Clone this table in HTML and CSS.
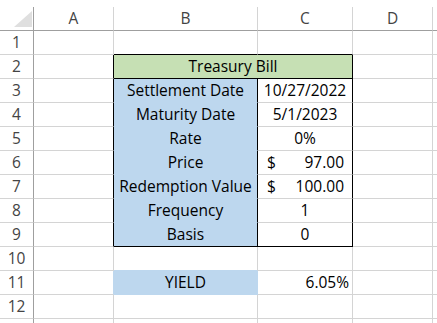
FILE: index.html
```html
<!DOCTYPE html>
<html>
<head>
<meta charset="utf-8">
<link rel="stylesheet" href="styles.css">
</head>
<body>
<div class="sheet">
  <div class="hd corner"><div class="tri"></div></div>
  <div class="hd col">A</div>
  <div class="hd col">B</div>
  <div class="hd col">C</div>
  <div class="hd col">D</div>
  <div class="hd col"></div>

  <div class="rh">1</div>
  <div class="c"></div>
  <div class="c bb-k"></div>
  <div class="c bb-k"></div>
  <div class="c"></div>
  <div class="c"></div>

  <div class="rh">2</div>
  <div class="c br-k"></div>
  <div class="c span2 green br-k bb-k center">Treasury Bill</div>
  <div class="c"></div>
  <div class="c"></div>

  <div class="rh">3</div>
  <div class="c br-k"></div>
  <div class="c blue br-k bb-b center">Settlement Date</div>
  <div class="c br-k center">10/27/2022</div>
  <div class="c"></div>
  <div class="c"></div>

  <div class="rh">4</div>
  <div class="c br-k"></div>
  <div class="c blue br-k bb-b center">Maturity Date</div>
  <div class="c br-k center">5/1/2023</div>
  <div class="c"></div>
  <div class="c"></div>

  <div class="rh">5</div>
  <div class="c br-k"></div>
  <div class="c blue br-k bb-b center">Rate</div>
  <div class="c br-k center">0%</div>
  <div class="c"></div>
  <div class="c"></div>

  <div class="rh">6</div>
  <div class="c br-k"></div>
  <div class="c blue br-k bb-b center">Price</div>
  <div class="c br-k acct"><span>$</span><span>97.00</span></div>
  <div class="c"></div>
  <div class="c"></div>

  <div class="rh">7</div>
  <div class="c br-k"></div>
  <div class="c blue br-k bb-b center">Redemption Value</div>
  <div class="c br-k acct"><span>$</span><span>100.00</span></div>
  <div class="c"></div>
  <div class="c"></div>

  <div class="rh">8</div>
  <div class="c br-k"></div>
  <div class="c blue br-k bb-b center">Frequency</div>
  <div class="c br-k center">1</div>
  <div class="c"></div>
  <div class="c"></div>

  <div class="rh">9</div>
  <div class="c br-k"></div>
  <div class="c blue br-k bb-k center">Basis</div>
  <div class="c br-k bb-k center">0</div>
  <div class="c"></div>
  <div class="c"></div>

  <div class="rh">10</div>
  <div class="c"></div>
  <div class="c bb-b"></div>
  <div class="c"></div>
  <div class="c"></div>
  <div class="c"></div>

  <div class="rh">11</div>
  <div class="c br-b"></div>
  <div class="c blue br-b bb-b center">YIELD</div>
  <div class="c right">6.05%</div>
  <div class="c"></div>
  <div class="c"></div>

  <div class="rh">12</div>
  <div class="c"></div>
  <div class="c"></div>
  <div class="c"></div>
  <div class="c"></div>
  <div class="c"></div>

  <div class="rh"></div>
  <div class="c"></div>
  <div class="c"></div>
  <div class="c"></div>
  <div class="c"></div>
  <div class="c"></div>
</div>
</body>
</html>
```
FILE: styles.css
```css
html, body {
  margin: 0;
  padding: 0;
  background: #fff;
}
body {
  width: 437px;
  height: 323px;
  overflow: hidden;
  padding-top: 7px;
  box-sizing: border-box;
}
.sheet {
  display: grid;
  grid-template-columns: 34px 80px 144px 95px 80px 1fr;
  grid-auto-rows: 24px;
  height: 316px;
  overflow: hidden;
  font-family: "Open Sans", sans-serif;
  font-size: 15.5px;
  line-height: 23px;
  color: #000;
}
.sheet > div {
  box-sizing: border-box;
  white-space: nowrap;
  overflow: hidden;
}
.hd {
  border-right: 1px solid #d4d4d4;
  border-bottom: 1px solid #9f9f9f;
  color: #444;
  text-align: center;
}
.corner {
  border-right-color: #9f9f9f;
  display: flex;
  justify-content: flex-end;
  align-items: flex-end;
}
.tri {
  width: 18px;
  height: 16px;
  margin: 0 1px 3px 0;
  background: #dfdfdf;
  clip-path: polygon(100% 0, 100% 100%, 0 100%);
}
.rh {
  border-right: 1px solid #9f9f9f;
  border-bottom: 1px solid #d4d4d4;
  color: #444;
  text-align: center;
}
.c {
  border-right: 1px solid #d4d4d4;
  border-bottom: 1px solid #d4d4d4;
  padding: 0 3px;
}
.span2 { grid-column: span 2; }
.green { background: #c6e0b4; }
.blue { background: #bdd7ee; }
.br-k { border-right-color: #000; }
.bb-k { border-bottom-color: #000; }
.bb-b { border-bottom-color: #bdd7ee; }
.br-b { border-right-color: #bdd7ee; }
.center { text-align: center; }
.right { text-align: right; }
.acct {
  display: flex;
  justify-content: space-between;
  padding: 0 8px 0 9px;
}
```
